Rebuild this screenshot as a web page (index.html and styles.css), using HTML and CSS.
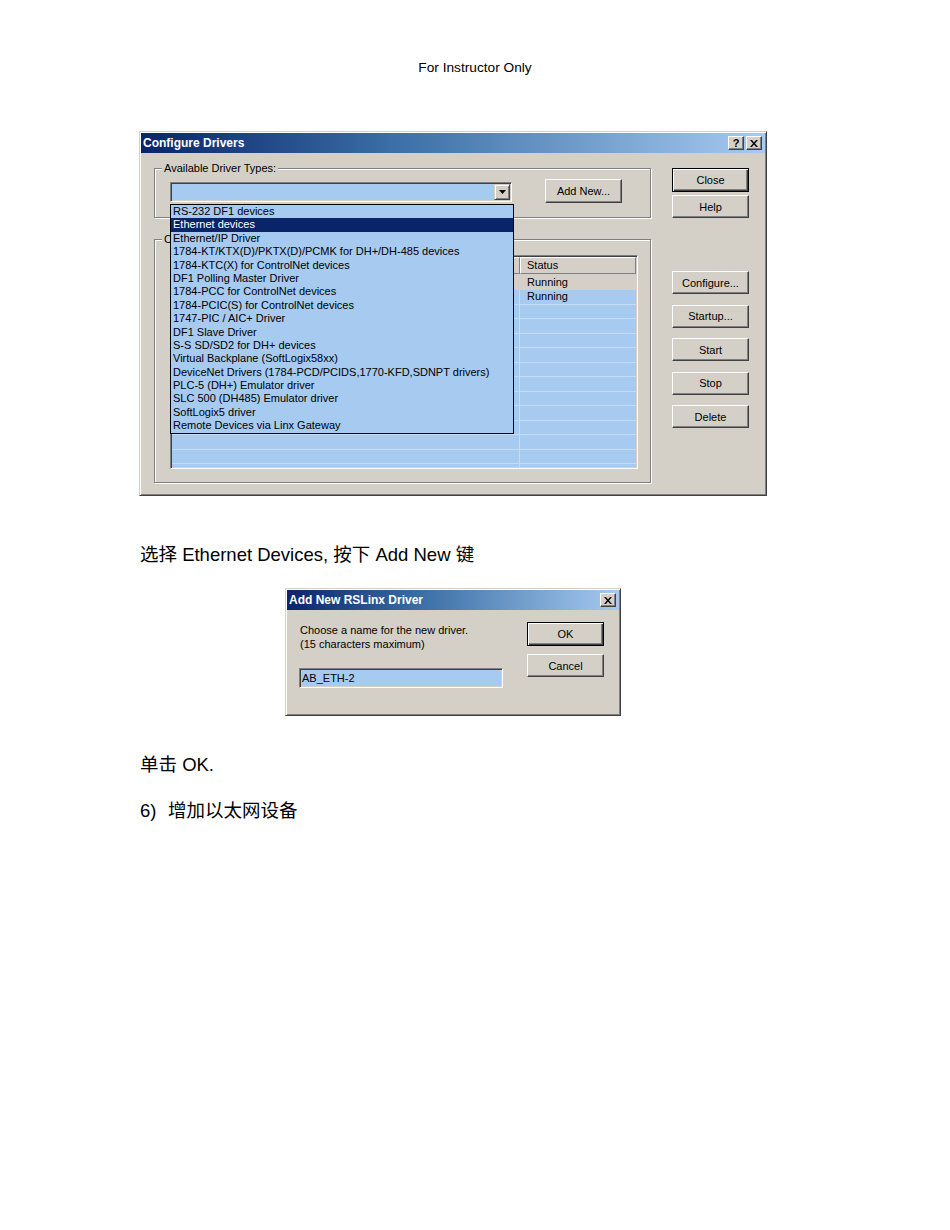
FILE: index.html
```html
<!DOCTYPE html>
<html>
<head>
<meta charset="utf-8">
<title>Configure Drivers</title>
<link rel="stylesheet" href="styles.css">
</head>
<body>
<div class="page">
  <div class="hdr">For Instructor Only</div>

  <div class="dlg dlg-main">
    <div class="titlebar">
      <span class="ttl">Configure Drivers</span>
      <span class="tbtns">
        <span class="tbtn qm">?</span>
        <span class="tbtn"><svg width="8" height="7" viewBox="0 0 8 7"><path d="M0 0h2l2 2.5L6 0h2L5 3.5 8 7H6L4 4.5 2 7H0l3-3.5z" fill="#000"/></svg></span>
      </span>
    </div>
    <div class="main-body">
      <div class="leftcol">
        <div class="group g1">
          <span class="legend">Available Driver Types:</span>
          <div class="combo">
            <div class="combo-arrow"><svg width="7" height="4" viewBox="0 0 7 4"><path d="M0 0h7L3.5 4z" fill="#000"/></svg></div>
          </div>
          <div class="btn addnew">Add New...</div>
        </div>
        <div class="group g2">
          <span class="legend">Configured Drivers:</span>
          <div class="table">
            <div class="thead">
              <div class="th"></div>
              <div class="th">Status</div>
            </div>
            <div class="tr first"><div class="td"></div><div class="td">Running</div></div>
            <div class="tr"><div class="td"></div><div class="td">Running</div></div>
            <div class="tr"><div class="td"></div><div class="td"></div></div>
            <div class="tr"><div class="td"></div><div class="td"></div></div>
            <div class="tr"><div class="td"></div><div class="td"></div></div>
            <div class="tr"><div class="td"></div><div class="td"></div></div>
            <div class="tr"><div class="td"></div><div class="td"></div></div>
            <div class="tr"><div class="td"></div><div class="td"></div></div>
            <div class="tr"><div class="td"></div><div class="td"></div></div>
            <div class="tr"><div class="td"></div><div class="td"></div></div>
            <div class="tr"><div class="td"></div><div class="td"></div></div>
            <div class="tr"><div class="td"></div><div class="td"></div></div>
            <div class="tr"><div class="td"></div><div class="td"></div></div>
            <div class="tr"><div class="td"></div><div class="td"></div></div>
          </div>
        </div>
      </div>
      <div class="rightcol">
        <div class="btn def">Close</div>
        <div class="btn help">Help</div>
        <div class="btn cfg">Configure...</div>
        <div class="btn gap">Startup...</div>
        <div class="btn gap">Start</div>
        <div class="btn gap">Stop</div>
        <div class="btn gap">Delete</div>
      </div>
    </div>

    <div class="droplist">
      <div class="item">RS-232 DF1 devices</div>
      <div class="item sel">Ethernet devices</div>
      <div class="item">Ethernet/IP Driver</div>
      <div class="item">1784-KT/KTX(D)/PKTX(D)/PCMK for DH+/DH-485 devices</div>
      <div class="item">1784-KTC(X) for ControlNet devices</div>
      <div class="item">DF1 Polling Master Driver</div>
      <div class="item">1784-PCC for ControlNet devices</div>
      <div class="item">1784-PCIC(S) for ControlNet devices</div>
      <div class="item">1747-PIC / AIC+ Driver</div>
      <div class="item">DF1 Slave Driver</div>
      <div class="item">S-S SD/SD2 for DH+ devices</div>
      <div class="item">Virtual Backplane (SoftLogix58xx)</div>
      <div class="item">DeviceNet Drivers (1784-PCD/PCIDS,1770-KFD,SDNPT drivers)</div>
      <div class="item">PLC-5 (DH+) Emulator driver</div>
      <div class="item">SLC 500 (DH485) Emulator driver</div>
      <div class="item">SoftLogix5 driver</div>
      <div class="item">Remote Devices via Linx Gateway</div>
    </div>
  </div>

  <p class="txt p1">选择 Ethernet Devices, 按下 Add New 键</p>

  <div class="dlg dlg-add">
    <div class="titlebar">
      <span class="ttl">Add New RSLinx Driver</span>
      <span class="tbtns">
        <span class="tbtn"><svg width="8" height="7" viewBox="0 0 8 7"><path d="M0 0h2l2 2.5L6 0h2L5 3.5 8 7H6L4 4.5 2 7H0l3-3.5z" fill="#000"/></svg></span>
      </span>
    </div>
    <div class="add-body">
      <div class="add-left">
        <div class="add-text">Choose a name for the new driver.<br>(15 characters maximum)</div>
        <div class="input">AB_ETH-2</div>
      </div>
      <div class="add-right">
        <div class="btn def">OK</div>
        <div class="btn cancel">Cancel</div>
      </div>
    </div>
  </div>

  <p class="txt p2">单击 OK.</p>
  <p class="txt p3"><span class="num">6)</span>增加以太网设备</p>
</div>
</body>
</html>
```

FILE: styles.css
```css
* { box-sizing: border-box; }

body {
  margin: 0;
  background: #fff;
  color: #000;
  font-family: "Liberation Sans", "Noto Sans CJK SC", sans-serif;
}

.page {
  width: 950px;
  height: 1230px;
  padding-top: 60px;
  overflow: hidden;
}

.hdr {
  text-align: center;
  font-size: 13.7px;
  line-height: 15px;
}

/* ---------- Windows classic dialog ---------- */
.dlg {
  position: relative;
  background: #d4d0c8;
  border: 1px solid;
  border-color: #d4d0c8 #404040 #404040 #d4d0c8;
  box-shadow: inset 1px 1px 0 #fff, inset -1px -1px 0 #808080;
  padding: 1px;
  font-family: "Liberation Sans", Arial, sans-serif;
  font-size: 11px;
}

.dlg-main {
  margin: 56px 0 0 139px;
  width: 628px;
  height: 365px;
}

.titlebar {
  height: 20px;
  background: linear-gradient(to right, #0a246a 0%, #3a6ea5 40%, #a6caf0 100%);
  display: flex;
  align-items: center;
  justify-content: space-between;
  padding: 0 3px 0 2px;
  color: #fff;
  font-weight: bold;
  font-size: 12px;
}

.tbtns {
  display: flex;
  gap: 2px;
}

.tbtn {
  width: 16px;
  height: 14px;
  background: #d4d0c8;
  border: 1px solid;
  border-color: #fff #404040 #404040 #fff;
  box-shadow: inset -1px -1px 0 #808080;
  display: flex;
  align-items: center;
  justify-content: center;
  color: #000;
  font-size: 11px;
  font-weight: bold;
  line-height: 1;
}

.main-body {
  display: flex;
  gap: 21px;
  padding: 15px 0 0 13px;
}

.leftcol {
  width: 497px;
  display: flex;
  flex-direction: column;
}

.group {
  position: relative;
  border: 1px solid #808080;
  box-shadow: 1px 1px 0 #fff, inset 1px 1px 0 #fff;
}

.legend {
  position: absolute;
  top: -7px;
  left: 7px;
  padding: 0 2px;
  background: #d4d0c8;
  line-height: 13px;
  white-space: nowrap;
}

.g1 {
  height: 50px;
  display: flex;
  align-items: flex-start;
  padding: 10px 0 0 15px;
}

.combo {
  width: 342px;
  height: 20px;
  margin-top: 3px;
  border: 1px solid;
  border-color: #808080 #fff #fff #808080;
  box-shadow: inset 1px 1px 0 #404040, inset -1px -1px 0 #d4d0c8;
  background: #a6caf0;
  display: flex;
  justify-content: flex-end;
  padding: 1px;
}

.combo-arrow {
  width: 16px;
  height: 16px;
  background: #d4d0c8;
  border: 1px solid;
  border-color: #d4d0c8 #404040 #404040 #d4d0c8;
  box-shadow: inset 1px 1px 0 #fff, inset -1px -1px 0 #808080;
  display: flex;
  align-items: center;
  justify-content: center;
}

.btn {
  width: 77px;
  height: 23px;
  background: #d4d0c8;
  border: 1px solid;
  border-color: #fff #404040 #404040 #fff;
  box-shadow: inset -1px -1px 0 #808080;
  display: flex;
  align-items: center;
  justify-content: center;
  white-space: nowrap;
}

.btn.def {
  height: 24px;
  border: 1px solid #000;
  box-shadow: inset 1px 1px 0 #fff, inset -1px -1px 0 #404040, inset -2px -2px 0 #808080;
}

.addnew {
  height: 24px;
  margin-left: 33px;
}

.g2 {
  height: 244px;
  margin-top: 21px;
  padding: 15px 0 0 15px;
}

.table {
  width: 468px;
  height: 214px;
  border: 1px solid;
  border-color: #808080 #fff #fff #808080;
  box-shadow: inset 1px 1px 0 #404040, inset -1px -1px 0 #d4d0c8;
  background: #a6caf0;
  padding: 1px;
  overflow: hidden;
}

.thead,
.tr {
  display: grid;
  grid-template-columns: 348px 116px;
}

.th {
  height: 17px;
  line-height: 15px;
  padding-left: 6px;
  background: #d4d0c8;
  border: 1px solid;
  border-color: #fff #808080 #808080 #fff;
  white-space: nowrap;
  overflow: hidden;
}

.tr {
  height: 14.5px;
}

.td {
  border-bottom: 1px solid #c6dcf2;
  line-height: 13px;
  padding-left: 7px;
  white-space: nowrap;
  overflow: hidden;
}

.td:first-child {
  border-right: 1px solid #c6dcf2;
  padding-left: 3px;
}

.tr.first {
  height: 16px;
  background: #d4d0c8;
}

.tr.first .td {
  border-color: #d4d0c8;
  line-height: 16px;
}

.rightcol {
  width: 77px;
  display: flex;
  flex-direction: column;
}

.rightcol .help { margin-top: 3px; }
.rightcol .cfg { margin-top: 53px; }
.rightcol .gap { margin-top: 10.5px; }

/* dropdown list overlay */
.droplist {
  position: absolute;
  left: 30px;
  top: 72px;
  width: 344px;
  height: 230px;
  border: 1px solid #000;
  background: #a6caf0;
}

.item {
  height: 13.4px;
  line-height: 13.4px;
  padding-left: 2px;
  white-space: nowrap;
}

.item.sel {
  background: #0a246a;
  color: #fff;
}

/* ---------- page text ---------- */
.txt {
  margin: 0 0 0 140px;
  font-size: 18.5px;
  line-height: 22px;
}

.p1 { margin-top: 48px; }
.p2 { margin-top: 38px; }
.p3 { margin-top: 24px; }

.num {
  display: inline-block;
  width: 28px;
}

/* ---------- add new driver dialog ---------- */
.dlg-add {
  margin: 22px 0 0 285px;
  width: 336px;
  height: 128px;
}

.add-body {
  display: flex;
  padding: 13px 0 0 12px;
}

.add-left {
  width: 228px;
}

.add-text {
  padding-left: 1px;
  line-height: 14px;
}

.input {
  width: 204px;
  height: 20px;
  margin-top: 17px;
  border: 1px solid;
  border-color: #808080 #fff #fff #808080;
  box-shadow: inset 1px 1px 0 #404040, inset -1px -1px 0 #d4d0c8;
  background: #a6caf0;
  padding-left: 2px;
  line-height: 18px;
}

.add-right {
  width: 77px;
  margin-top: -1px;
  display: flex;
  flex-direction: column;
}

.add-right .cancel { margin-top: 8px; }
```
